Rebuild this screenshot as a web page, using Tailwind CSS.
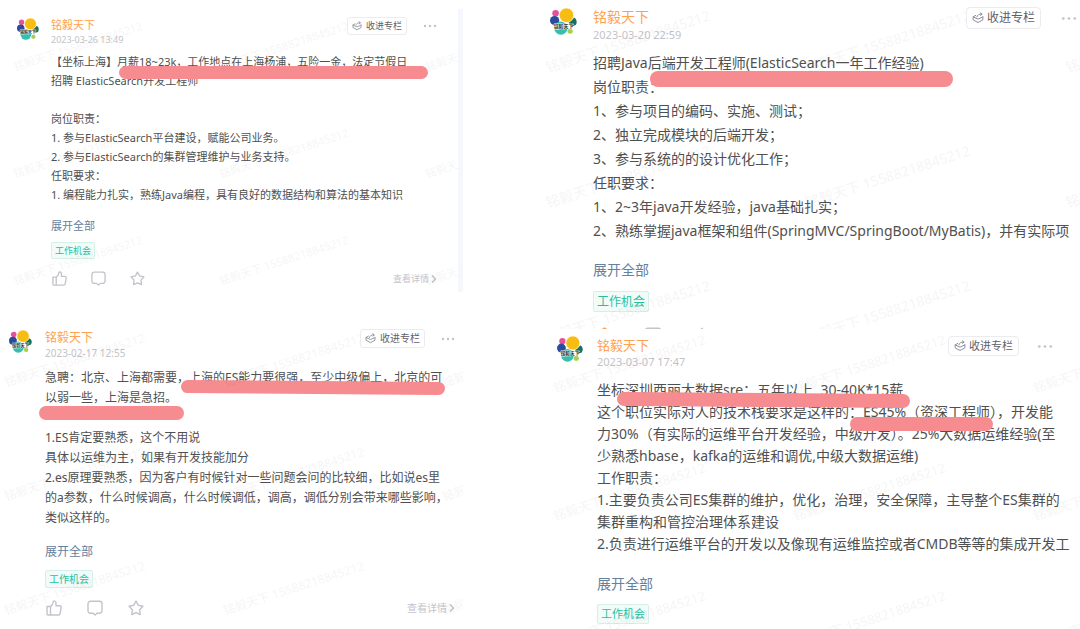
<!DOCTYPE html>
<html lang="zh-CN">
<head>
    <meta charset="UTF-8">
    <meta name="viewport" content="width=device-width, initial-scale=1.0">
    <title>铭毅天下 - 工作机会</title>
    <script src="https://cdn.jsdelivr.net/npm/@tailwindcss/browser@4"></script>
</head>
<body class="min-h-screen overflow-hidden bg-white font-['Noto_Sans','Noto_Sans_CJK_SC',sans-serif] text-[#505050]">
    <!-- Shared icons -->
    <svg class="hidden" aria-hidden="true">
        <symbol id="avatar" viewBox="0 0 82 82">
            <circle cx="17" cy="16" r="10" fill="#e5529a"/>
            <circle cx="14" cy="38" r="14" fill="#2b4b9b"/>
            <path d="M56 44 74 29Q86 38 78 52L66 56Z" fill="#17705c"/>
            <circle cx="61" cy="70" r="8" fill="#a5d04a"/>
            <circle cx="33" cy="61" r="20" fill="#36bfb1"/>
            <circle cx="50" cy="22" r="22" fill="#f8bd13" stroke="#fff" stroke-width="2"/>
            <text x="41" y="61" text-anchor="middle" font-size="15" font-weight="700" fill="#333" stroke="#fff" stroke-width="2" paint-order="stroke">铭毅天下</text>
        </symbol>
        <symbol id="stack" viewBox="0 0 16 16">
            <g fill="none" stroke="currentColor" stroke-width="1.3" stroke-linecap="round" stroke-linejoin="round">
                <path d="M5 4.500 1.500 6.500 8 9.500l6.500-3"/>
                <path d="M6.500 6.500C7 4 9 2.500 13 2.800M11.200 1.200l2.300 1.600-2 1.800"/>
                <path d="M1.500 6.500v4L8 14l6.500-3.500v-4"/>
            </g>
        </symbol>
        <symbol id="thumb" viewBox="0 0 16 16">
            <g fill="none" stroke="currentColor" stroke-width="1.4" stroke-linejoin="round">
                <path d="M1 6.500h3.500V15H2a1 1 0 0 1-1-1z"/>
                <path d="M4.500 6.500C6.500 5.500 7 4 7.200 2 7.400.6 10 .6 10 3v2.800h4A1.200 1.200 0 0 1 15.200 7.200l-1.100 6.500A1.500 1.500 0 0 1 12.600 15H4.500"/>
            </g>
        </symbol>
        <symbol id="bubble" viewBox="0 0 16 16">
            <path d="M3.500 1.200h9a2.500 2.500 0 0 1 2.500 2.500v7a2.500 2.500 0 0 1-2.500 2.500H10L8 15l-2-1.800H3.500A2.500 2.500 0 0 1 1 10.700v-7a2.500 2.500 0 0 1 2.500-2.500z" fill="none" stroke="currentColor" stroke-width="1.400" stroke-linejoin="round"/>
        </symbol>
        <symbol id="star" viewBox="0 0 16 16">
            <path d="m8 1.200 2.200 4 4.700 1-3.200 3.500.5 4.800L8 12.600l-4.200 1.900.5-4.800L1.100 6.200l4.700-1z" fill="none" stroke="currentColor" stroke-width="1.400" stroke-linejoin="round"/>
        </symbol>
        <symbol id="dots" viewBox="0 0 14 4">
            <g fill="#c3c4ca"><circle cx="2" cy="2" r="1.200"/><circle cx="7" cy="2" r="1.200"/><circle cx="12" cy="2" r="1.200"/></g>
        </symbol>
    </svg>

    <main class="grid grid-cols-2 items-start whitespace-nowrap">
        <div>
            <!-- Shanghai -->
            <article class="relative mt-[9px] mr-[77px] flex gap-3 overflow-hidden border-r-[5px] border-[#f5f7fc] pt-2 pr-[21px] pb-1.5 pl-[17px]">
                <svg class="mt-px size-[22px] shrink-0" role="img" aria-label="铭毅天下"><use href="#avatar"/></svg>
                <div class="min-w-0 flex-1">
                    <header class="flex items-start">
                        <div class="flex-1">
                            <a href="#" class="block text-[11px] leading-4 text-[#ffa250]">铭毅天下</a>
                            <time class="block text-[9px] leading-[14px] text-[#c2c3c9]">2023-03-26 13:49</time>
                        </div>
                        <button type="button" class="relative z-10 flex h-[18px] items-center gap-1 rounded-[3px] border border-[#ebebf0] bg-white px-1 text-[9px] text-[#5f6068]">
                            <svg class="size-2.5 text-[#8a8c99]"><use href="#stack"/></svg>收进专栏
                        </button>
                        <button type="button" aria-label="更多" class="ml-4 flex h-[18px] items-center"><svg class="h-1 w-3.5"><use href="#dots"/></svg></button>
                    </header>
                    <div class="mt-[5px] text-[11px] leading-[19px]">
                        <p>【坐标上海】月薪18~23k，工作地点在上海杨浦，五险一金，法定节假日</p>
                        <p>招聘 ElasticSearch开发工程师</p>
                        <br>
                        <p>岗位职责：</p>
                        <p>1. 参与ElasticSearch平台建设，赋能公司业务。</p>
                        <p>2. 参与ElasticSearch的集群管理维护与业务支持。</p>
                        <p>任职要求：</p>
                        <p>1. 编程能力扎实，熟练Java编程，具有良好的数据结构和算法的基本知识</p>
                    </div>
                    <a href="#" class="mt-3 block w-fit text-[11px] leading-[19px] text-[#64819f]">展开全部</a>
                    <a href="#" class="mt-[7px] flex h-[17px] w-fit items-center rounded-xs border border-[#d5f0e9] bg-[#f3fbf9] px-[3px] text-[9px] text-[#26c09c]">工作机会</a>
                    <footer class="mt-3 flex items-center text-[#c3c4cb]">
                        <div class="flex flex-1 gap-6 pl-px">
                            <button type="button" aria-label="点赞"><svg class="size-[15px]"><use href="#thumb"/></svg></button>
                            <button type="button" aria-label="评论"><svg class="size-[15px]"><use href="#bubble"/></svg></button>
                            <button type="button" aria-label="收藏"><svg class="size-[15px]"><use href="#star"/></svg></button>
                        </div>
                        <a href="#" class="flex items-center gap-0.5 text-[9px] leading-[14px]">查看详情
                            <svg class="h-2 w-1.5" viewBox="0 0 6 8" fill="none" stroke="currentColor" stroke-width="1.5"><path d="m1 .5 3.500 3.500L1 7.500"/></svg>
                        </a>
                    </footer>
                </div>
                <span class="absolute top-[57px] left-[119px] h-[13px] w-[309px] rounded-full bg-[#f68c8f]"></span>
                <svg class="pointer-events-none absolute inset-0 size-full" aria-hidden="true">
                    <pattern id="wm1" x="10" y="7" width="206" height="107" patternUnits="userSpaceOnUse">
                        <text x="5" y="55" transform="rotate(-18 5 55)" class="fill-black/4 text-[11px]">铭毅天下 15588218845212</text>
                    </pattern>
                    <rect width="100%" height="100%" fill="url(#wm1)"/>
                </svg>
            </article>

            <!-- Beijing / Shanghai -->
            <article class="relative flex gap-[13px] overflow-hidden pt-[37px] pr-[85px] pb-3 pl-[9px]">
                <svg class="mt-px size-[23px] shrink-0" role="img" aria-label="铭毅天下"><use href="#avatar"/></svg>
                <div class="min-w-0 flex-1">
                    <header class="flex items-start">
                        <div class="flex-1">
                            <a href="#" class="block text-[12px] leading-[17px] text-[#ffa250]">铭毅天下</a>
                            <time class="block text-[10px] leading-[14px] text-[#c2c3c9]">2023-02-17 12:55</time>
                        </div>
                        <button type="button" class="relative z-10 flex h-[19px] items-center gap-1 rounded-[3px] border border-[#ebebf0] bg-white px-1 text-[10px] text-[#5f6068]">
                            <svg class="size-[11px] text-[#8a8c99]"><use href="#stack"/></svg>收进专栏
                        </button>
                        <button type="button" aria-label="更多" class="ml-4 flex h-[19px] items-center"><svg class="h-1 w-3.5"><use href="#dots"/></svg></button>
                    </header>
                    <div class="mt-2 text-[12px] leading-5">
                        <p>急聘：北京、上海都需要，上海的ES能力要很强，至少中级偏上，北京的可</p>
                        <p>以弱一些，上海是急招。</p>
                        <br>
                        <p>1.ES肯定要熟悉，这个不用说</p>
                        <p>具体以运维为主，如果有开发技能加分</p>
                        <p>2.es原理要熟悉，因为客户有时候针对一些问题会问的比较细，比如说es里</p>
                        <p>的a参数，什么时候调高，什么时候调低，调高，调低分别会带来哪些影响，</p>
                        <p>类似这样的。</p>
                    </div>
                    <a href="#" class="mt-3.5 block w-fit text-[12px] leading-5 text-[#64819f]">展开全部</a>
                    <a href="#" class="mt-2 flex h-[18px] w-fit items-center rounded-xs border border-[#d5f0e9] bg-[#f3fbf9] px-[3px] text-[10px] text-[#26c09c]">工作机会</a>
                    <footer class="mt-3 flex items-center text-[#c3c4cb]">
                        <div class="flex flex-1 gap-[25px] pl-px">
                            <button type="button" aria-label="点赞"><svg class="size-4"><use href="#thumb"/></svg></button>
                            <button type="button" aria-label="评论"><svg class="size-4"><use href="#bubble"/></svg></button>
                            <button type="button" aria-label="收藏"><svg class="size-4"><use href="#star"/></svg></button>
                        </div>
                        <a href="#" class="flex items-center gap-0.5 text-[10px] leading-4">查看详情
                            <svg class="h-2 w-1.5" viewBox="0 0 6 8" fill="none" stroke="currentColor" stroke-width="1.5"><path d="m1 .5 3.500 3.500L1 7.500"/></svg>
                        </a>
                    </footer>
                </div>
                <span class="absolute top-[89px] left-[181px] h-[13px] w-[264px] rotate-[0.4deg] rounded-full bg-[#f68c8f]"></span>
                <span class="absolute top-[114px] left-[39px] h-[14px] w-[145px] rounded-full bg-[#f68c8f]"></span>
                <svg class="pointer-events-none absolute inset-0 size-full" aria-hidden="true">
                    <pattern id="wm2" x="1" y="38" width="219" height="114" patternUnits="userSpaceOnUse">
                        <text x="5" y="57" transform="rotate(-18 5 57)" class="fill-black/4 text-[12px]">铭毅天下 15588218845212</text>
                    </pattern>
                    <rect width="463" height="100%" fill="url(#wm2)"/>
                </svg>
            </article>
        </div>

        <div>
            <!-- Java backend -->
            <article class="relative flex gap-4 overflow-hidden pt-[7px] pr-[3px] pl-[10px]">
                <svg class="mt-px size-[27px] shrink-0" role="img" aria-label="铭毅天下"><use href="#avatar"/></svg>
                <div class="min-w-0 flex-1">
                    <header class="flex items-start">
                        <div class="flex-1">
                            <a href="#" class="block text-[14px] leading-5 text-[#ffa250]">铭毅天下</a>
                            <time class="block text-[11px] leading-4 text-[#c2c3c9]">2023-03-20 22:59</time>
                        </div>
                        <button type="button" class="relative z-10 flex h-[22px] items-center gap-[3px] rounded-[4px] border border-[#ebebf0] bg-white px-[5px] text-[12px] text-[#5f6068]">
                            <svg class="size-3 text-[#8a8c99]"><use href="#stack"/></svg>收进专栏
                        </button>
                        <button type="button" aria-label="更多" class="ml-5 flex h-[22px] items-center"><svg class="h-[5px] w-4"><use href="#dots"/></svg></button>
                    </header>
                    <div class="mt-2 text-[14px] leading-6">
                        <p>招聘Java后端开发工程师(ElasticSearch一年工作经验)</p>
                        <p>岗位职责：</p>
                        <p>1、参与项目的编码、实施、测试；</p>
                        <p>2、独立完成模块的后端开发；</p>
                        <p>3、参与系统的的设计优化工作；</p>
                        <p>任职要求：</p>
                        <p>1、2~3年java开发经验，java基础扎实；</p>
                        <p>2、熟练掌握java框架和组件(SpringMVC/SpringBoot/MyBatis)，并有实际项</p>
                    </div>
                    <a href="#" class="mt-[15px] block w-fit text-[14px] leading-6 text-[#64819f]">展开全部</a>
                    <a href="#" class="mt-[9px] flex h-[21px] w-fit items-center rounded-xs border border-[#d5f0e9] bg-[#f3fbf9] px-[3px] text-[12px] text-[#26c09c]">工作机会</a>
                    <footer class="mt-[15px] flex h-[2px] items-start gap-[31px] overflow-hidden pl-0.5 text-[#c3c4cb]">
                        <button type="button" aria-label="点赞" class="text-[#ffa250]"><svg class="size-[18px]"><use href="#thumb"/></svg></button>
                        <button type="button" aria-label="评论"><svg class="size-[18px]"><use href="#bubble"/></svg></button>
                        <button type="button" aria-label="收藏"><svg class="size-[18px]"><use href="#star"/></svg></button>
                    </footer>
                </div>
                <span class="absolute top-[71px] left-[110px] h-4 w-[303px] rounded-full bg-[#f68c8f]"></span>
                <svg class="pointer-events-none absolute inset-0 size-full" aria-hidden="true">
                    <pattern id="wm3" x="2" y="5" width="260" height="135" patternUnits="userSpaceOnUse">
                        <text x="6" y="68" transform="rotate(-18 6 68)" class="fill-black/4 text-[14px]">铭毅天下 15588218845212</text>
                    </pattern>
                    <rect width="100%" height="100%" fill="url(#wm3)"/>
                </svg>
            </article>

            <!-- Shenzhen SRE -->
            <article class="relative flex gap-[14px] overflow-hidden pt-[7px] pr-[27px] pb-1.5 pl-[17px]">
                <svg class="size-[26px] shrink-0" role="img" aria-label="铭毅天下"><use href="#avatar"/></svg>
                <div class="min-w-0 flex-1">
                    <header class="flex items-start">
                        <div class="flex-1">
                            <a href="#" class="block text-[13px] leading-[18px] text-[#ffa250]">铭毅天下</a>
                            <time class="block text-[11px] leading-4 text-[#c2c3c9]">2023-03-07 17:47</time>
                        </div>
                        <button type="button" class="relative z-10 flex h-5 items-center gap-[3px] rounded-[4px] border border-[#ebebf0] bg-white px-[5px] text-[11px] text-[#5f6068]">
                            <svg class="size-3 text-[#8a8c99]"><use href="#stack"/></svg>收进专栏
                        </button>
                        <button type="button" aria-label="更多" class="ml-[18px] flex h-5 items-center"><svg class="h-[5px] w-4"><use href="#dots"/></svg></button>
                    </header>
                    <div class="mt-[9px] text-[14px] leading-[22px]">
                        <p>坐标深圳西丽大数据sre：五年以上&nbsp; 30-40K*15薪</p>
                        <p>这个职位实际对人的技术栈要求是这样的：ES45%（资深工程师），开发能</p>
                        <p>力30%（有实际的运维平台开发经验，中级开发）。25%大数据运维经验(至</p>
                        <p>少熟悉hbase，kafka的运维和调优,中级大数据运维)</p>
                        <p>工作职责：</p>
                        <p>1.主要负责公司ES集群的维护，优化，治理，安全保障，主导整个ES集群的</p>
                        <p>集群重构和管控治理体系建设</p>
                        <p>2.负责进行运维平台的开发以及像现有运维监控或者CMDB等等的集成开发工</p>
                    </div>
                    <a href="#" class="mt-[18px] block w-fit text-[14px] leading-[22px] text-[#64819f]">展开全部</a>
                    <a href="#" class="mt-[9px] flex h-5 w-fit items-center rounded-xs border border-[#d5f0e9] bg-[#f3fbf9] px-[3px] text-[11px] text-[#26c09c]">工作机会</a>
                </div>
                <span class="absolute top-[64px] left-[77px] h-[14px] w-[293px] rotate-[0.4deg] rounded-full bg-[#f68c8f]"></span>
                <span class="absolute top-[88px] left-[310px] h-[14px] w-[143px] rounded-full bg-[#f68c8f]"></span>
                <svg class="pointer-events-none absolute inset-0 size-full" aria-hidden="true">
                    <pattern id="wm4" x="8" y="3" width="240" height="128" patternUnits="userSpaceOnUse">
                        <text x="7" y="61" transform="rotate(-18 7 61)" class="fill-black/4 text-[13px]">铭毅天下 15588218845212</text>
                    </pattern>
                    <rect width="100%" height="100%" fill="url(#wm4)"/>
                </svg>
            </article>
        </div>
    </main>
</body>
</html>
